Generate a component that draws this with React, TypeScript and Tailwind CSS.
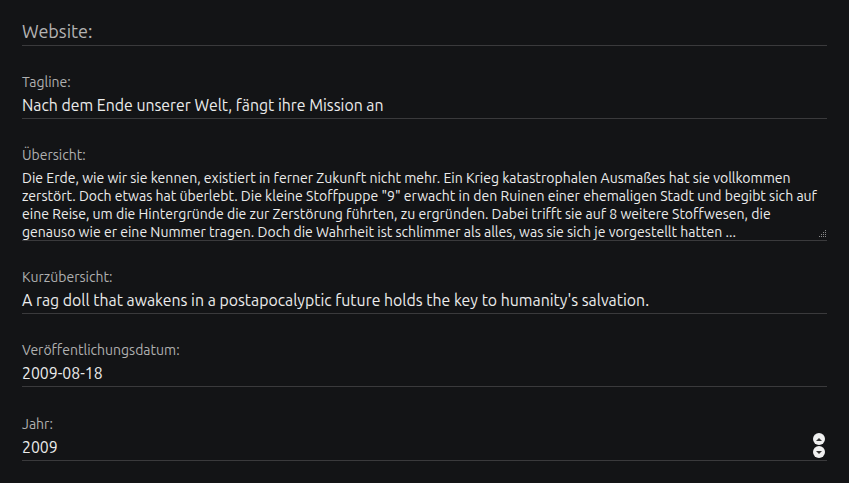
import React from "react";

const overviewLines = [
  "Die Erde, wie wir sie kennen, existiert in ferner Zukunft nicht mehr. Ein Krieg katastrophalen Ausmaßes hat sie vollkommen",
  'zerstört. Doch etwas hat überlebt. Die kleine Stoffpuppe "9" erwacht in den Ruinen einer ehemaligen Stadt und begibt sich auf',
  "eine Reise, um die Hintergründe die zur Zerstörung führten, zu ergründen. Dabei trifft sie auf 8 weitere Stoffwesen, die",
  "genauso wie er eine Nummer tragen. Doch die Wahrheit ist schlimmer als alles, was sie sich je vorgestellt hatten ...",
];

function Field({
  label,
  value,
  className = "mt-[26px]",
  children,
}: {
  label: string;
  value?: string;
  className?: string;
  children?: React.ReactNode;
}) {
  return (
    <div className={className}>
      <div className="h-[20px] text-[14px] leading-[20px] text-[#b0b0b0]">{label}</div>
      <div className="relative flex h-[27px] items-center border-b border-[#3a3a3c] pt-[1px] text-[15.85px] text-[#ececec]">
        {value}
        {children}
      </div>
    </div>
  );
}

function Spinner() {
  return (
    <div className="absolute right-[2px] top-[-1px] flex flex-col gap-[1px]">
      <div className="flex h-[12px] w-[12px] items-center justify-center rounded-full bg-[#f0f0f0]">
        <div className="h-0 w-0 border-x-[3px] border-b-[3px] border-x-transparent border-b-[#333]" />
      </div>
      <div className="flex h-[12px] w-[12px] items-center justify-center rounded-full bg-[#f0f0f0]">
        <div className="h-0 w-0 border-x-[3px] border-t-[3px] border-x-transparent border-t-[#333]" />
      </div>
    </div>
  );
}

export default function App() {
  return (
    <div className="min-h-screen bg-[#131416] px-[22px] pt-[19px] font-['Ubuntu','Noto_Sans',sans-serif]">
      <div className="flex h-[27px] items-center border-b border-[#3a3a3c] pb-[1px] text-[18px] text-[#b3b3b3]">Website:</div>

      <Field label="Tagline:" value="Nach dem Ende unserer Welt, fängt ihre Mission an" />

      <div className="mt-[26px]">
        <div className="h-[20px] text-[14px] leading-[20px] text-[#b0b0b0]">Übersicht:</div>
        <div className="relative mt-[2px] h-[74px] overflow-hidden border-b border-[#3a3a3c] pt-[2px] text-[14.05px] leading-[18px] text-[#ececec]">
          {overviewLines.map((l, i) => (
            <div key={i} className="whitespace-nowrap">{l}</div>
          ))}
          <svg className="absolute bottom-[1px] right-0" width="10" height="10" viewBox="0 0 10 10" fill="#8a8a8a">
            <rect x="8" y="1" width="1" height="1" />
            <rect x="6" y="3" width="1" height="1" />
            <rect x="8" y="3" width="1" height="1" />
            <rect x="4" y="5" width="1" height="1" />
            <rect x="6" y="5" width="1" height="1" />
            <rect x="8" y="5" width="1" height="1" />
            <rect x="2" y="7" width="1" height="1" />
            <rect x="4" y="7" width="1" height="1" />
            <rect x="6" y="7" width="1" height="1" />
            <rect x="8" y="7" width="1" height="1" />
          </svg>
        </div>
      </div>

      <Field
        label="Kurzübersicht:"
        value="A rag doll that awakens in a postapocalyptic future holds the key to humanity's salvation."
      />
      <Field label="Veröffentlichungsdatum:" value="2009-08-18" />
      <Field label="Jahr:" value="2009" className="mt-[27px]">
        <Spinner />
      </Field>
    </div>
  );
}
